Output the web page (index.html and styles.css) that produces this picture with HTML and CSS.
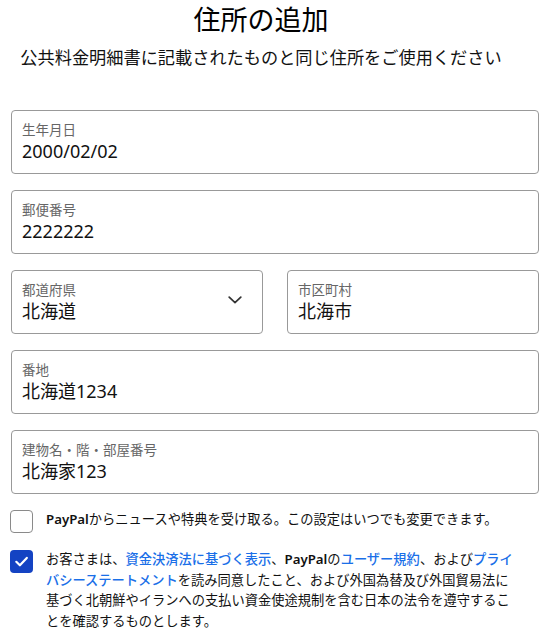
FILE: index.html
```html
<!DOCTYPE html>
<html lang="ja">
<head>
<meta charset="utf-8">
<title>住所の追加</title>
<link rel="stylesheet" href="styles.css">
</head>
<body>
<main class="page">
  <header class="head">
    <h1 class="title">住所の追加</h1>
    <p class="subtitle">公共料金明細書に記載されたものと同じ住所をご使用ください</p>
  </header>

  <form class="form">
    <div class="field">
      <div class="field-label">生年月日</div>
      <div class="field-value">2000/02/02</div>
    </div>
    <div class="field">
      <div class="field-label">郵便番号</div>
      <div class="field-value">2222222</div>
    </div>
    <div class="row">
      <div class="field field-select">
        <div class="field-main">
          <div class="field-label">都道府県</div>
          <div class="field-value">北海道</div>
        </div>
        <svg class="chevron" width="14" height="8" viewBox="0 0 14 8" aria-hidden="true">
          <path d="M1.2 1.2 L7 6.6 L12.8 1.2" fill="none" stroke="#333" stroke-width="1.7" stroke-linecap="round" stroke-linejoin="round"/>
        </svg>
      </div>
      <div class="field">
        <div class="field-label">市区町村</div>
        <div class="field-value">北海市</div>
      </div>
    </div>
    <div class="field">
      <div class="field-label">番地</div>
      <div class="field-value">北海道1234</div>
    </div>
    <div class="field">
      <div class="field-label">建物名・階・部屋番号</div>
      <div class="field-value">北海家123</div>
    </div>

    <div class="check-row">
      <span class="box"></span>
      <p class="check-text"><b class="brand">PayPal</b>からニュースや特典を受け取る。この設定はいつでも変更できます。</p>
    </div>
    <div class="check-row check-row-2">
      <span class="box box-on">
        <svg width="23" height="23" viewBox="0 0 23 23" aria-hidden="true">
          <path d="M6.3 11.8 L9.9 15.3 L16.8 7.9" fill="none" stroke="#fff" stroke-width="2.2" stroke-linecap="round" stroke-linejoin="round"/>
        </svg>
      </span>
      <p class="check-text">お客さまは、<a class="link" href="#">資金決済法に基づく表示</a>、<b class="brand">PayPal</b>の<a class="link" href="#">ユーザー規約</a>、および<a class="link" href="#">プライ<br>バシーステートメント</a>を読み同意したこと、および外国為替及び外国貿易法に<br>基づく北朝鮮やイランへの支払い資金使途規制を含む日本の法令を遵守するこ<br>とを確認するものとします。</p>
    </div>
  </form>
</main>
</body>
</html>
```

FILE: styles.css
```css
html, body {
  margin: 0;
  padding: 0;
  background: #fff;
}

body {
  font-family: "Noto Sans", "Noto Sans CJK JP", sans-serif;
  color: #000;
}

.page {
  width: 550px;
  box-sizing: border-box;
  padding: 0 11px;
}

.head {
  text-align: center;
  padding-right: 28px;
}

.title {
  margin: 0;
  font-size: 27px;
  font-weight: 400;
  line-height: 40px;
}

.subtitle {
  margin: 6px 0 0;
  font-size: 17.2px;
  line-height: 24px;
  white-space: nowrap;
  color: #111;
}

.form {
  margin-top: 40px;
  display: flex;
  flex-direction: column;
  gap: 16px;
}

.row {
  display: grid;
  grid-template-columns: 1fr 1fr;
  column-gap: 24px;
}

.field {
  box-sizing: border-box;
  height: 64px;
  border: 1px solid #999;
  border-radius: 4px;
  padding: 9px 10px 0;
}

.field-label {
  font-size: 13.5px;
  line-height: 20px;
  color: #666;
  white-space: nowrap;
}

.field-value {
  font-size: 18px;
  line-height: 22px;
  color: #111;
  white-space: nowrap;
}

.field-select {
  display: flex;
  align-items: flex-start;
}

.field-main {
  flex: 1;
}

.chevron {
  display: block;
  margin-top: 16px;
  margin-right: 10px;
}

.check-row {
  display: flex;
  align-items: flex-start;
  gap: 13px;
  margin-left: -1px;
}

.check-row-2 {
  margin-top: 1px;
}

.box {
  flex: none;
  box-sizing: border-box;
  width: 23px;
  height: 23px;
  border: 1px solid #8a8a8a;
  border-radius: 4px;
  background: #fff;
}

.box-on {
  border: none;
  background: #1443c3;
}

.box svg {
  display: block;
}

.check-text {
  margin: -1px 0 0;
  font-size: 13.25px;
  line-height: 20.5px;
  color: #111;
  white-space: nowrap;
}

.brand {
  font-weight: 600;
}

.link {
  color: #1a6fe8;
  text-decoration: none;
  font-weight: 500;
}
```
